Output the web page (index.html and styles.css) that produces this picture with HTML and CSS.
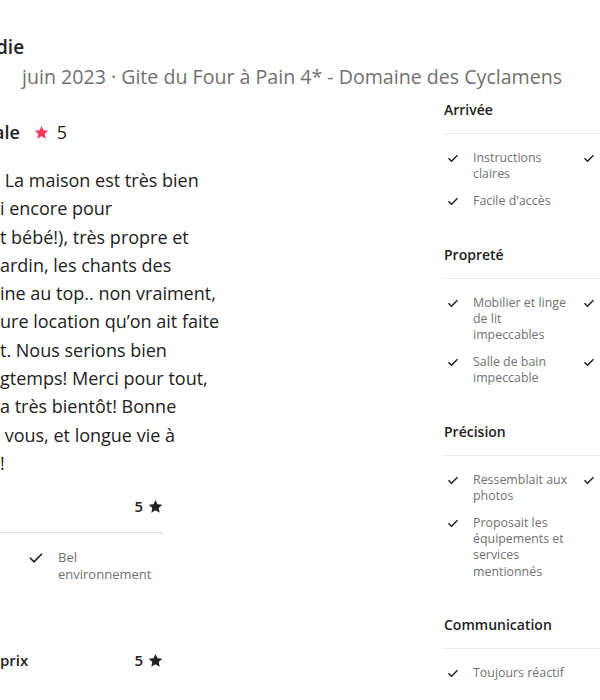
FILE: index.html
```html
<!doctype html>
<html>
<head>
  <meta charset="utf-8">
  <link rel="stylesheet" href="styles.css">
</head>
<body>
  <div class="page">
    <div class="name">die</div>
    <div class="meta">juin 2023 · Gite du Four à Pain 4* - Domaine des Cyclamens</div>

    <div class="cols">
      <div class="main">
        <div class="score">
          <span class="score-label">ale</span>
          <svg class="pink-star" viewBox="0 0 32 32"><path d="M16 2l4.2 9.4 10.3 1-7.7 6.9 2.2 10.1L16 24.2l-9 5.2 2.2-10.1-7.7-6.9 10.3-1z"/></svg>
          <span class="score-num">5</span>
        </div>

        <p class="comment">&nbsp;La maison est très bien<br>i encore pour<br>t bébé!), très propre et<br>ardin, les chants des<br>ine au top.. non vraiment,<br>ure location qu’on ait faite<br>t. Nous serions bien<br>gtemps! Merci pour tout,<br>a très bientôt! Bonne<br>&nbsp;vous, et longue vie à<br>!</p>

        <div class="cat">
          <div class="cat-head">
            <span class="cat-label"></span>
            <span class="cat-rate">5 <svg class="star" viewBox="0 0 32 32"><path d="M16 2l4.2 9.4 10.3 1-7.7 6.9 2.2 10.1L16 24.2l-9 5.2 2.2-10.1-7.7-6.9 10.3-1z"/></svg></span>
          </div>
          <ul class="cat-tags">
            <li>
              <svg class="check big" viewBox="0 0 32 32"><path d="M4 16.5l8 8 16-16"/></svg>
              <span>Bel environnement</span>
            </li>
          </ul>
        </div>

        <div class="cat last">
          <div class="cat-head">
            <span class="cat-label">prix</span>
            <span class="cat-rate">5 <svg class="star" viewBox="0 0 32 32"><path d="M16 2l4.2 9.4 10.3 1-7.7 6.9 2.2 10.1L16 24.2l-9 5.2 2.2-10.1-7.7-6.9 10.3-1z"/></svg></span>
          </div>
        </div>
      </div>

      <div class="side">
        <div class="section">
          <h4>Arrivée</h4>
          <ul class="tags">
            <li><svg class="check" viewBox="0 0 32 32"><path d="M4 16.5l8 8 16-16"/></svg><span>Instructions claires</span></li>
            <li><svg class="check" viewBox="0 0 32 32"><path d="M4 16.5l8 8 16-16"/></svg><span></span></li>
            <li><svg class="check" viewBox="0 0 32 32"><path d="M4 16.5l8 8 16-16"/></svg><span>Facile d'accès</span></li>
          </ul>
        </div>

        <div class="section">
          <h4>Propreté</h4>
          <ul class="tags">
            <li><svg class="check" viewBox="0 0 32 32"><path d="M4 16.5l8 8 16-16"/></svg><span>Mobilier et linge de lit impeccables</span></li>
            <li><svg class="check" viewBox="0 0 32 32"><path d="M4 16.5l8 8 16-16"/></svg><span></span></li>
            <li><svg class="check" viewBox="0 0 32 32"><path d="M4 16.5l8 8 16-16"/></svg><span>Salle de bain impeccable</span></li>
            <li><svg class="check" viewBox="0 0 32 32"><path d="M4 16.5l8 8 16-16"/></svg><span></span></li>
          </ul>
        </div>

        <div class="section">
          <h4>Précision</h4>
          <ul class="tags">
            <li><svg class="check" viewBox="0 0 32 32"><path d="M4 16.5l8 8 16-16"/></svg><span>Ressemblait aux photos</span></li>
            <li><svg class="check" viewBox="0 0 32 32"><path d="M4 16.5l8 8 16-16"/></svg><span></span></li>
            <li><svg class="check" viewBox="0 0 32 32"><path d="M4 16.5l8 8 16-16"/></svg><span>Proposait les équipements et services mentionnés</span></li>
          </ul>
        </div>

        <div class="section">
          <h4>Communication</h4>
          <ul class="tags">
            <li><svg class="check" viewBox="0 0 32 32"><path d="M4 16.5l8 8 16-16"/></svg><span>Toujours réactif</span></li>
          </ul>
        </div>
      </div>
    </div>
  </div>
</body>
</html>
```

FILE: styles.css
```css
html, body {
  margin: 0;
  overflow: hidden;
}
body {
  width: 600px;
  height: 700px;
  font-family: "Open Sans", "Noto Sans", sans-serif;
  color: #222222;
  background: #ffffff;
}
.page {
  padding-top: 36px;
}
.name {
  margin-left: -4px;
  font-size: 19px;
  font-weight: 600;
  line-height: 22px;
}
.meta {
  margin: 8px 0 0 22px;
  font-size: 19.6px;
  line-height: 22px;
  color: #717171;
  white-space: nowrap;
}
.cols {
  display: grid;
  grid-template-columns: 224px 272px;
  column-gap: 220px;
  margin-top: 13px;
}

/* left column */
.main {
  padding-top: 19px;
}
.score {
  display: flex;
  align-items: center;
  font-size: 18px;
  font-weight: 600;
  line-height: 24px;
}
.score-label {
  margin-left: -6px;
}
.pink-star {
  width: 15px;
  height: 15px;
  margin-left: 14px;
  fill: #ff385c;
}
.score-num {
  margin-left: 8px;
  font-weight: 400;
}
.comment {
  margin: 22px 0 0;
  font-size: 18px;
  line-height: 28.3px;
  white-space: nowrap;
}
.cat {
  width: 163px;
  margin-top: 19px;
}
.cat.last {
  margin-top: 67px;
}
.cat-head {
  display: flex;
  justify-content: space-between;
  align-items: center;
  font-size: 15px;
  font-weight: 600;
  line-height: 20px;
}
.cat .cat-head {
  padding-bottom: 16px;
  border-bottom: 1px solid #dddddd;
}
.cat.last .cat-head {
  padding-bottom: 0;
  border-bottom: none;
}
.cat-rate {
  display: flex;
  align-items: center;
  gap: 5px;
}
.star {
  width: 15px;
  height: 15px;
  fill: #222222;
}
.cat-tags {
  list-style: none;
  margin: 16px 0 0;
  padding: 0 0 0 28px;
}
.cat-tags li {
  display: flex;
  gap: 14px;
  font-size: 13px;
  line-height: 17px;
  color: #717171;
}
.cat-tags li span {
  width: 100px;
}

/* right column */
.section {
  margin-bottom: 36px;
}
.section h4 {
  margin: 0;
  padding-bottom: 14px;
  border-bottom: 1px solid #ebebeb;
  font-size: 14px;
  font-weight: 600;
  line-height: 18px;
}
.tags {
  list-style: none;
  margin: 16px 0 0;
  padding: 0;
  display: grid;
  grid-template-columns: 136px 136px;
  row-gap: 11px;
}
.tags li {
  display: flex;
  align-items: flex-start;
  gap: 14px;
  padding-left: 3px;
  font-size: 12.4px;
  line-height: 16.2px;
  color: #717171;
}
.tags li span {
  width: 96px;
}
.check {
  flex: none;
  width: 12px;
  height: 16px;
  fill: none;
  stroke: #222222;
  stroke-width: 4;
}
.check.big {
  width: 16px;
  height: 17px;
  stroke-width: 3.5;
}
```
